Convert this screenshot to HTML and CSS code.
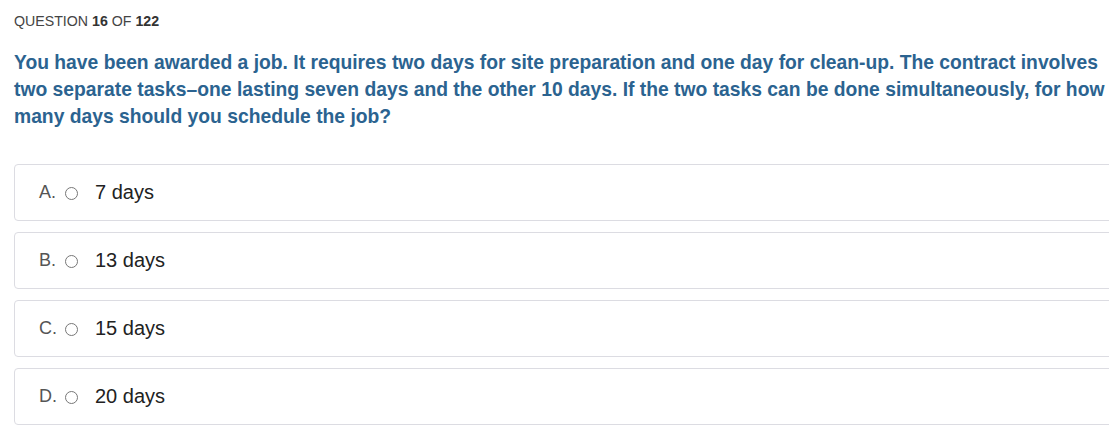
FILE: index.html
```html
<!DOCTYPE html>
<html>
<head>
<meta charset="utf-8">
<link rel="stylesheet" href="styles.css">
</head>
<body>
<div class="quiz">
  <div class="counter">QUESTION <b>16</b> OF <b>122</b></div>
  <p class="question">You have been awarded a job. It requires two days for site preparation and one day for clean-up. The contract involves two separate tasks–one lasting seven days and the other 10 days. If the two tasks can be done simultaneously, for how many days should you schedule the job?</p>
  <div class="options">
    <label class="option"><span class="letter">A.</span><span class="radio"></span><span class="answer">7 days</span></label>
    <label class="option"><span class="letter">B.</span><span class="radio"></span><span class="answer">13 days</span></label>
    <label class="option"><span class="letter">C.</span><span class="radio"></span><span class="answer">15 days</span></label>
    <label class="option"><span class="letter">D.</span><span class="radio"></span><span class="answer">20 days</span></label>
  </div>
</div>
</body>
</html>
```

FILE: styles.css
```css
html, body {
  margin: 0;
  padding: 0;
  background: #fff;
  overflow: hidden;
}
body {
  font-family: "Liberation Sans", Arial, sans-serif;
}
.quiz {
  padding: 13px 0 0 14px;
}
.counter {
  font-size: 14.2px;
  color: #444;
  line-height: 16px;
}
.counter b {
  font-weight: bold;
  color: #333;
}
.question {
  margin: 20px 0 0 0;
  width: 1095px;
  font-size: 19.3px;
  font-weight: bold;
  line-height: 27px;
  color: #2b6390;
}
.options {
  margin-top: 34px;
  width: 1110px;
  display: flex;
  flex-direction: column;
  gap: 11px;
}
.option {
  display: flex;
  align-items: center;
  border: 1px solid #dcdce2;
  border-radius: 4px;
  padding-left: 24px;
  box-sizing: border-box;
  height: 57px;
}
.letter {
  font-size: 18px;
  color: #555;
  width: 26px;
}
.radio {
  width: 11px;
  height: 11px;
  border: 1px solid #777;
  border-radius: 50%;
  margin-right: 17px;
  margin-top: 2px;
}
.answer {
  font-size: 20px;
  color: #222;
}
```
